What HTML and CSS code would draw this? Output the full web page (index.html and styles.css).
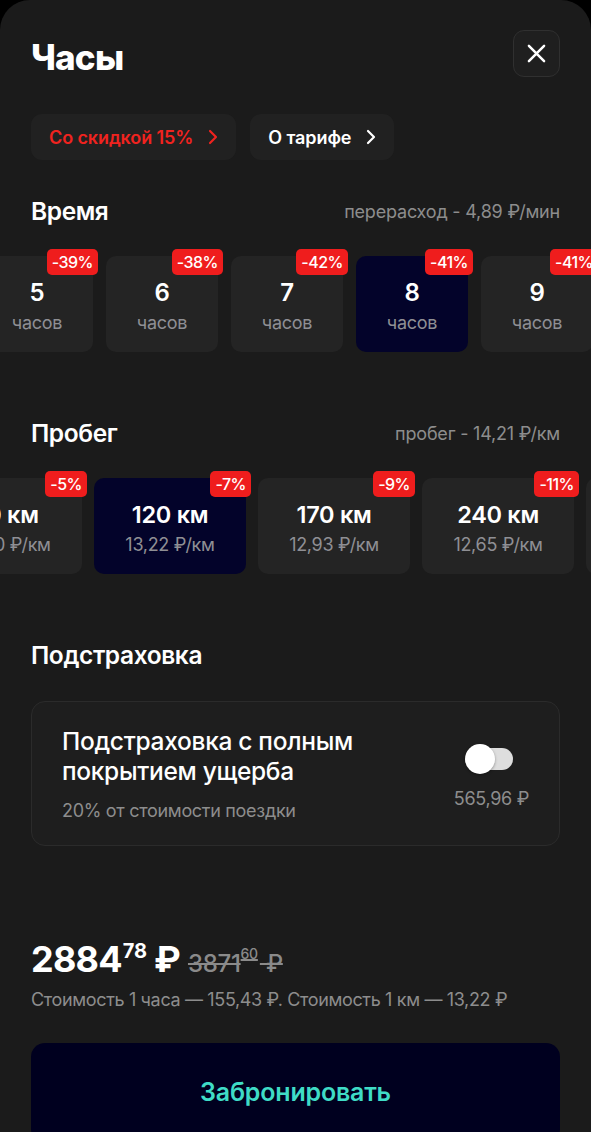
FILE: index.html
```html
<!DOCTYPE html>
<html lang="ru">
<head>
<meta charset="utf-8">
<title>Часы</title>
<link rel="stylesheet" href="styles.css">
</head>
<body>
<div class="sheet">
  <header class="head">
    <h1 class="title">Часы</h1>
    <button class="close" aria-label="Закрыть">
      <svg width="20" height="20" viewBox="0 0 20 20"><path d="M2 2 L18 18 M18 2 L2 18" stroke="#fff" stroke-width="2.6" stroke-linecap="round"/></svg>
    </button>
  </header>

  <div class="pills">
    <a class="pill pill-red">Со скидкой 15%
      <svg width="10" height="16" viewBox="0 0 10 16"><path d="M2 2 L8 8 L2 14" fill="none" stroke="#f0231f" stroke-width="2.2" stroke-linecap="round" stroke-linejoin="round"/></svg>
    </a>
    <a class="pill">О тарифе
      <svg width="10" height="16" viewBox="0 0 10 16"><path d="M2 2 L8 8 L2 14" fill="none" stroke="#fff" stroke-width="2.2" stroke-linecap="round" stroke-linejoin="round"/></svg>
    </a>
  </div>

  <div class="sec-head sec-time">
    <h2>Время</h2>
    <span class="note">перерасход - 4,89 ₽/мин</span>
  </div>
  <div class="scroller">
    <div class="track track-time">
      <div class="card card-time"><span class="badge">-39%</span><b>5</b><span class="sub">часов</span></div>
      <div class="card card-time"><span class="badge">-38%</span><b>6</b><span class="sub">часов</span></div>
      <div class="card card-time"><span class="badge">-42%</span><b>7</b><span class="sub">часов</span></div>
      <div class="card card-time active"><span class="badge">-41%</span><b>8</b><span class="sub">часов</span></div>
      <div class="card card-time"><span class="badge">-41%</span><b>9</b><span class="sub">часов</span></div>
    </div>
  </div>

  <div class="sec-head sec-km">
    <h2>Пробег</h2>
    <span class="note">пробег - 14,21 ₽/км</span>
  </div>
  <div class="scroller">
    <div class="track track-km">
      <div class="card card-km"><span class="badge">-5%</span><b>70 км</b><span class="sub">13,50 ₽/км</span></div>
      <div class="card card-km active"><span class="badge">-7%</span><b>120 км</b><span class="sub">13,22 ₽/км</span></div>
      <div class="card card-km"><span class="badge">-9%</span><b>170 км</b><span class="sub">12,93 ₽/км</span></div>
      <div class="card card-km"><span class="badge">-11%</span><b>240 км</b><span class="sub">12,65 ₽/км</span></div>
      <div class="card card-km"><b>300 км</b><span class="sub">12,40 ₽/км</span></div>
    </div>
  </div>

  <div class="sec-head sec-ins">
    <h2>Подстраховка</h2>
  </div>
  <div class="ins">
    <div class="ins-text">
      <div class="ins-title">Подстраховка с полным покрытием ущерба</div>
      <div class="ins-sub">20% от стоимости поездки</div>
    </div>
    <div class="ins-side">
      <span class="toggle"><span class="knob"></span></span>
      <span class="ins-price">565,96 ₽</span>
    </div>
  </div>

  <div class="total">
    <div class="price">
      <span class="big">2884</span><sup class="cents">78</sup><span class="big rub">₽</span>
      <s class="old"><span>3871</span><sup>60</sup> ₽</s>
    </div>
    <div class="total-sub">Стоимость 1 часа — 155,43 ₽. Стоимость 1 км — 13,22 ₽</div>
  </div>

  <button class="book">Забронировать</button>
</div>
</body>
</html>
```

FILE: styles.css
```css
* { box-sizing: border-box; }
html, body { margin: 0; padding: 0; background: #000; }
body {
  font-family: Inter, "Noto Sans", sans-serif;
  color: #fff;
  width: 591px;
  height: 1132px;
  overflow: hidden;
}
.sheet {
  background: #1b1b1b;
  border-radius: 30px 30px 0 0;
  min-height: 1132px;
  padding-top: 30px;
  overflow: hidden;
}
.head {
  display: flex;
  justify-content: space-between;
  align-items: center;
  padding: 0 31px;
  height: 47px;
}
.title {
  margin: 6px 0 0;
  font-size: 35px;
  font-weight: 800;
  letter-spacing: -0.8px;
}
.close {
  width: 47px;
  height: 47px;
  border-radius: 11px;
  background: #1f1f1f;
  border: 1px solid #303030;
  display: flex;
  align-items: center;
  justify-content: center;
  padding: 0;
}
.close svg { width: 19px; height: 19px; }
.pills {
  display: flex;
  gap: 14px;
  padding: 0 31px;
  margin-top: 37px;
}
.pill {
  display: flex;
  align-items: center;
  gap: 15px;
  height: 46px;
  padding: 0 18px 0 18px;
  border-radius: 11px;
  background: #212121;
  font-size: 18px;
  font-weight: 600;
  letter-spacing: -0.1px;
  color: #fff;
}
.pill-red { color: #f0231f; padding-right: 18px; }
.sec-head {
  display: flex;
  justify-content: space-between;
  align-items: center;
  padding: 0 31px;
  height: 30px;
}
.sec-head h2 {
  margin: 0;
  font-size: 24.5px;
  font-weight: 600;
  letter-spacing: -0.4px;
}
.sec-time { margin-top: 36px; }
.sec-km { margin-top: 66px; }
.sec-ins { margin-top: 66px; }
.note {
  font-size: 18px;
  color: #8d8d8d;
  letter-spacing: -0.2px;
}
.scroller {
  overflow: hidden;
  padding-top: 8px;
  margin-top: 22px;
}
.track {
  display: flex;
}
.track-time { gap: 13px; margin-left: -19px; }
.track-km { gap: 12px; margin-left: -70px; }
.card {
  position: relative;
  flex: none;
  height: 96px;
  border-radius: 10px;
  background: #242424;
  display: flex;
  flex-direction: column;
  align-items: center;
  justify-content: center;
  gap: 4px;
  padding-top: 5px;
}
.card.active { background: #03032a; }
.card-time { width: 112px; }
.card-km { width: 152px; }
.card b {
  font-size: 24px;
  font-weight: 600;
  line-height: 28px;
  letter-spacing: -0.3px;
}
.card-km b { font-size: 23.5px; }
.card .sub {
  font-size: 18px;
  color: #8f8f94;
  line-height: 24px;
  letter-spacing: -0.3px;
}
.badge {
  position: absolute;
  top: -7px;
  right: -5px;
  height: 26px;
  padding: 0 5px;
  background: #ef1d1d;
  border-radius: 5px;
  font-size: 16px;
  font-weight: 500;
  line-height: 26px;
  color: #fff;
  letter-spacing: -0.5px;
}
.ins {
  margin: 31px 31px 0;
  height: 145px;
  border: 1px solid #2b2b2b;
  border-radius: 14px;
  background: #1e1e1e;
  display: flex;
  justify-content: space-between;
  align-items: center;
  padding: 0 30px 0 30px;
}
.ins-title {
  font-size: 24.5px;
  font-weight: 500;
  line-height: 30px;
  width: 340px;
  letter-spacing: -0.3px;
}
.ins-sub {
  margin-top: 14px;
  font-size: 18px;
  color: #8d8d8d;
  letter-spacing: -0.3px;
}
.ins-side {
  display: flex;
  flex-direction: column;
  align-items: center;
  gap: 18px;
  margin-top: 10px;
}
.toggle {
  position: relative;
  width: 46px;
  height: 22px;
  border-radius: 11px;
  background: #dedede;
  margin-right: 3px;
}
.knob {
  position: absolute;
  left: -2px;
  top: -4px;
  width: 30px;
  height: 30px;
  border-radius: 50%;
  background: #fff;
  box-shadow: 0 1px 3px rgba(0,0,0,0.35);
}
.ins-price {
  font-size: 18px;
  color: #8d8d8d;
  letter-spacing: -0.3px;
}
.total {
  padding: 0 31px;
  margin-top: 91px;
}
.price {
  display: flex;
  align-items: baseline;
  height: 44px;
}
.big {
  font-size: 36px;
  font-weight: 700;
  letter-spacing: -0.8px;
}
.cents {
  font-size: 20px;
  font-weight: 700;
  position: relative;
  top: -14px;
  vertical-align: baseline;
  margin-left: 1px;
}
.rub { margin-left: 7px; }
.old {
  margin-left: 8px;
  font-size: 24px;
  font-weight: 500;
  color: #8a8a8a;
  text-decoration-thickness: 2px;
  letter-spacing: -0.3px;
}
.old sup { font-size: 14px; font-weight: 500; position: relative; top: -4px; margin-right: 2px; }
.total-sub {
  margin-top: 8px;
  font-size: 18px;
  color: #8d8d8d;
  letter-spacing: -0.35px;
}
.book {
  display: block;
  margin: 33px 31px 0;
  width: 529px;
  height: 100px;
  border: none;
  border-radius: 14px;
  background: #00001f;
  color: #3fdcc6;
  font-family: Inter, "Noto Sans", sans-serif;
  font-size: 25px;
  font-weight: 600;
  letter-spacing: -0.2px;
  padding: 0 0 2px;
}
```
